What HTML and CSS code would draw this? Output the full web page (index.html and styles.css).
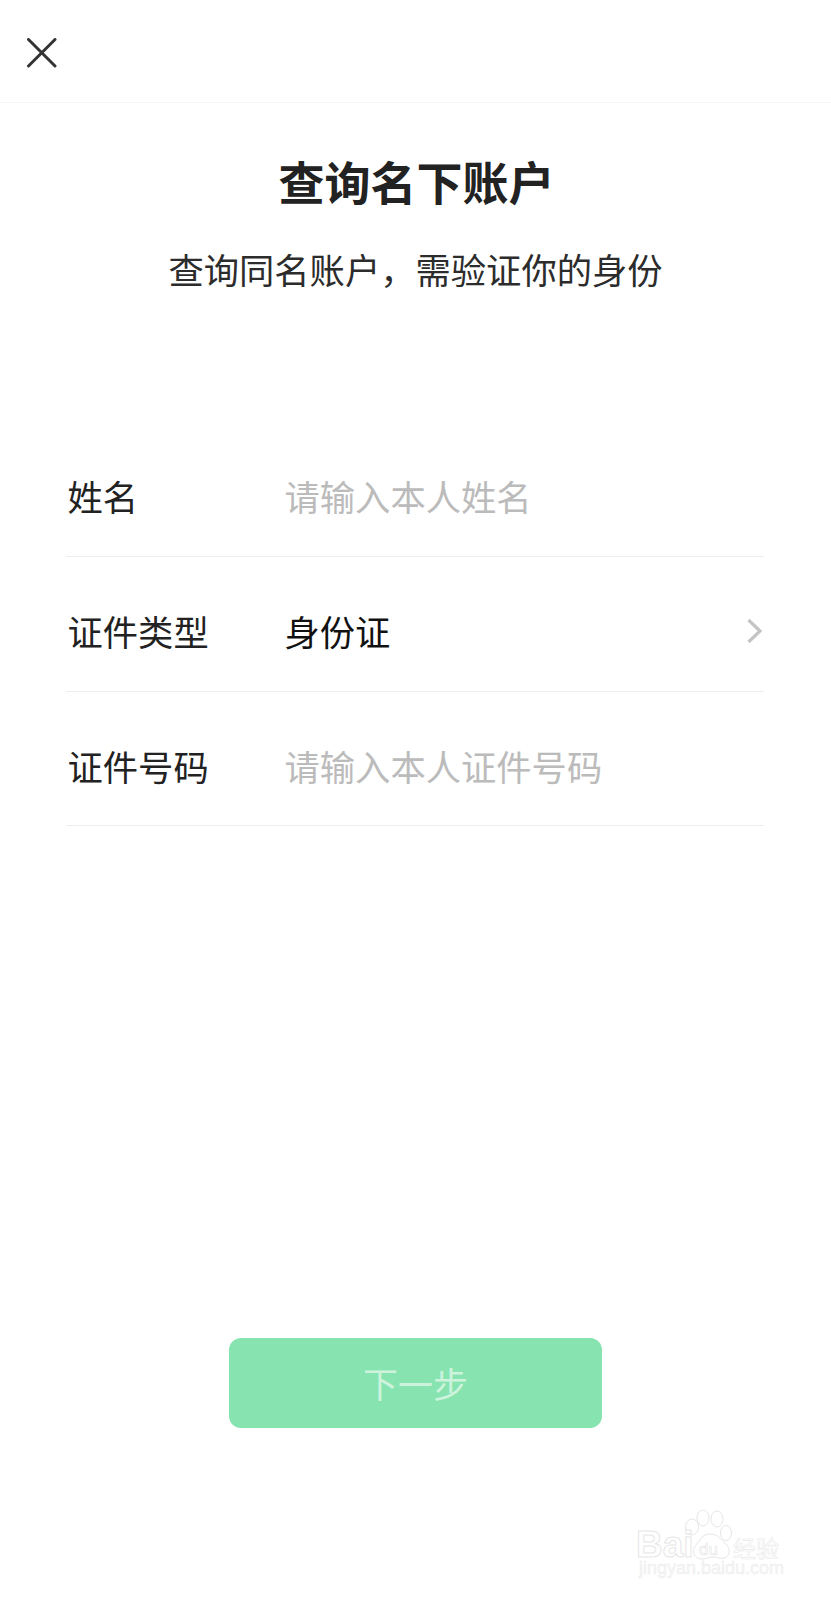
FILE: index.html
```html
<!DOCTYPE html>
<html lang="zh-CN">
<head>
    <meta charset="UTF-8">
    <meta name="viewport" content="width=device-width, initial-scale=1.0">
    <title>查询名下账户</title>
    <link rel="stylesheet" href="styles.css">
</head>
<body>
    <div class="page">
        <div class="topbar">
            <svg class="close" width="30" height="30" viewBox="0 0 30 30">
                <path d="M1.5 1.500L28 28M28 1.500L1.500 28" fill="none" stroke="#333" stroke-width="3" stroke-linecap="round"/>
            </svg>
        </div>
        <h1>查询名下账户</h1>
        <p class="sub">查询同名账户，需验证你的身份</p>
        <div class="form">
            <div class="row">
                <span class="label">姓名</span>
                <span class="hint">请输入本人姓名</span>
            </div>
            <div class="row">
                <span class="label">证件类型</span>
                <span class="value">身份证</span>
                <svg class="arrow" width="17" height="26" viewBox="0 0 17 26">
                    <path d="M2.500 2L14 13L2.500 24" fill="none" stroke="#c4c4c4" stroke-width="3.200"/>
                </svg>
            </div>
            <div class="row row-last">
                <span class="label">证件号码</span>
                <span class="hint">请输入本人证件号码</span>
            </div>
        </div>
        <div class="next">下一步</div>

        <svg class="mark" width="150" height="72" viewBox="0 0 150 72">
            <g fill="none" stroke="#e6e6e6" stroke-width="1">
                <ellipse cx="56" cy="17" rx="6.500" ry="8"/>
                <ellipse cx="67" cy="8" rx="6" ry="8"/>
                <ellipse cx="81" cy="9" rx="6" ry="8"/>
                <ellipse cx="90" cy="23" rx="5.500" ry="7.500"/>
                <path d="M74 24C66 24 64 30 60 35C55 41 58 49 66 49C71 49 73 47 77 47C81 47 84 49 88 48C95 46 94 38 90 34C85 30 82 24 74 24Z"/>
            </g>
            <g class="mark-text">
                <text x="0" y="47" class="mark-big">Bai</text>
                <text x="63" y="45" class="mark-du">du</text>
                <text x="97" y="47" class="mark-cn">经验</text>
                <text x="3" y="64" class="mark-url">jingyan.baidu.com</text>
            </g>
        </svg>
    </div>
</body>
</html>
```

FILE: styles.css
```css
body, html {
    margin: 0;
    padding: 0;
    background-color: #ffffff;
    font-family: "Noto Sans CJK SC", "Liberation Sans", sans-serif;
}
.page {
    position: relative;
    width: 831px;
    height: 1600px;
    overflow: hidden;
    display: flex;
    flex-direction: column;
    align-items: center;
}
.topbar {
    box-sizing: border-box;
    width: 100%;
    height: 103px;
    padding: 38px 0 0 27px;
    border-bottom: 1px solid #f6f6f6;
}
.close {
    display: block;
}
h1 {
    margin: 44px 0 0;
    padding-left: 2px;
    font-size: 46px;
    line-height: 66px;
    font-weight: 700;
    color: #222222;
}
.sub {
    margin: 30px 0 0;
    font-size: 35.3px;
    line-height: 52px;
    color: #2c2c2c;
}
.form {
    width: 698px;
    margin: 127px 2px 0 0;
}
.row {
    box-sizing: border-box;
    height: 135px;
    padding: 13px 0 0 2px;
    display: grid;
    grid-template-columns: 217px 1fr auto;
    align-items: center;
    border-bottom: 1px solid #eeeeee;
    font-size: 35.3px;
}
.row-last {
    height: 134px;
}
.label {
    color: #222222;
}
.hint {
    color: #bbbbbb;
}
.value {
    color: #111111;
}
.arrow {
    margin-right: 1px;
}
.next {
    width: 373px;
    height: 90px;
    margin-top: 512px;
    border-radius: 12px;
    background-color: #87e3af;
    color: #cdf3dd;
    font-size: 35px;
    line-height: 90px;
    text-align: center;
}
/* watermark sits over the page corner */
.mark {
    position: absolute;
    left: 636px;
    top: 1510px;
}
.mark-text {
    font-family: "Liberation Sans", "Noto Sans CJK SC", sans-serif;
    fill: #ffffff;
    stroke: #e6e6e6;
    stroke-width: 1;
}
.mark-big {
    font-size: 37px;
    font-weight: 700;
}
.mark-du {
    font-size: 17px;
    stroke-width: 0.6;
}
.mark-cn {
    font-size: 23px;
    stroke: #eaeaea;
    stroke-width: 0.6;
}
.mark-url {
    font-size: 18px;
    fill: #f6f6f6;
    stroke: #ececec;
    stroke-width: 0.4;
}
```
